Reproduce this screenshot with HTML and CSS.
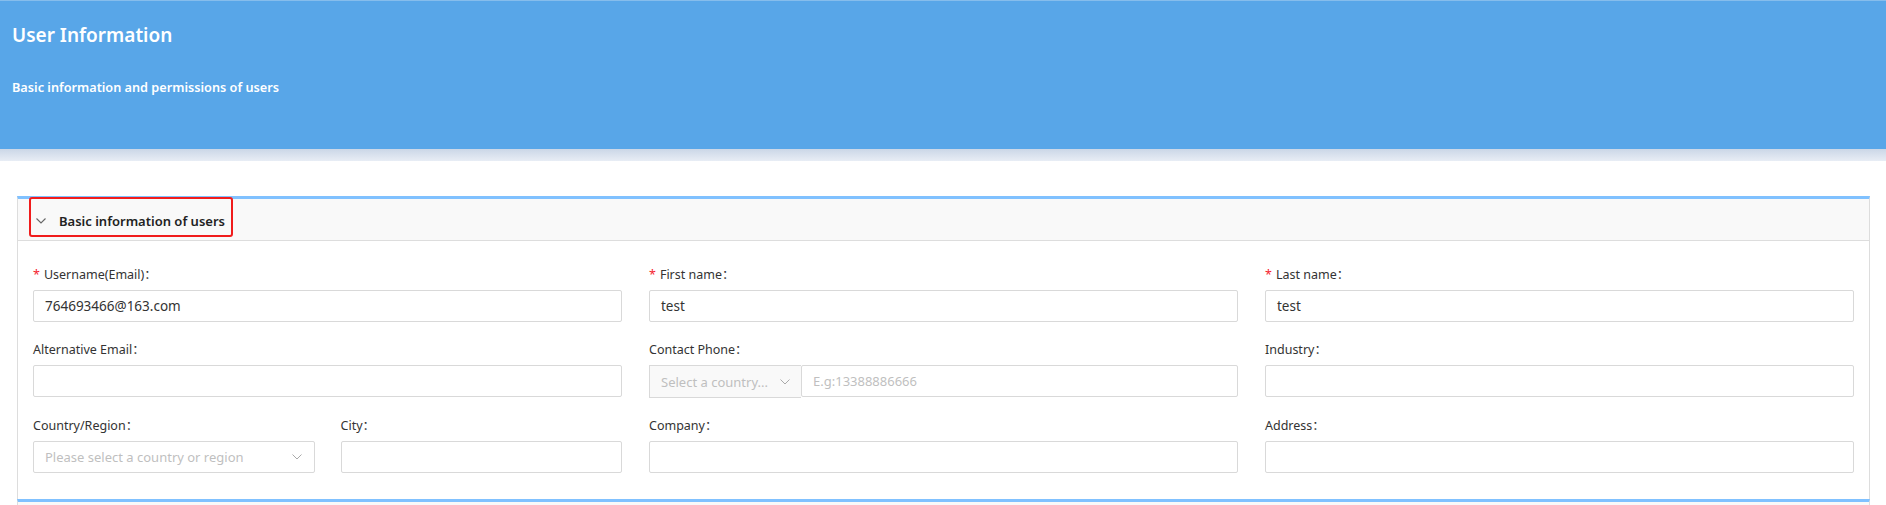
FILE: index.html
```html
<!DOCTYPE html>
<html lang="en">
<head>
<meta charset="utf-8">
<title>User Information</title>
<link rel="stylesheet" href="styles.css">
</head>
<body>
<header class="banner">
  <h1 class="banner-title">User Information</h1>
  <p class="banner-sub">Basic information and permissions of users</p>
</header>
<div class="banner-shade"></div>
<main class="content">
  <section class="panel">
    <div class="panel-head">
      <div class="panel-title">
        <svg class="chev" width="10" height="6" viewBox="0 0 10 6"><path d="M0.5 0.5 L5 5 L9.5 0.5" fill="none" stroke="#666" stroke-width="1.1"/></svg>
        <span>Basic information of users</span>
      </div>
    </div>
    <div class="panel-body">
      <div class="field">
        <label class="label"><span class="req">*</span>Username(Email)：</label>
        <div class="input"><span class="val">764693466@163.com</span></div>
      </div>
      <div class="field">
        <label class="label"><span class="req">*</span>First name：</label>
        <div class="input"><span class="val">test</span></div>
      </div>
      <div class="field">
        <label class="label"><span class="req">*</span>Last name：</label>
        <div class="input"><span class="val">test</span></div>
      </div>

      <div class="field">
        <label class="label">Alternative Email：</label>
        <div class="input"></div>
      </div>
      <div class="field">
        <label class="label">Contact Phone：</label>
        <div class="phone">
          <div class="addon">
            <span class="ph">Select a country...</span>
            <svg class="chev-s" width="10" height="6" viewBox="0 0 10 6"><path d="M0.5 0.5 L5 5 L9.5 0.5" fill="none" stroke="#aaa" stroke-width="1"/></svg>
          </div>
          <div class="input phone-input"><span class="ph">E.g:13388886666</span></div>
        </div>
      </div>
      <div class="field">
        <label class="label">Industry：</label>
        <div class="input"></div>
      </div>

      <div class="split">
        <div class="field">
          <label class="label">Country/Region：</label>
          <div class="input select">
            <span class="ph">Please select a country or region</span>
            <svg class="chev-s" width="10" height="6" viewBox="0 0 10 6"><path d="M0.5 0.5 L5 5 L9.5 0.5" fill="none" stroke="#aaa" stroke-width="1"/></svg>
          </div>
        </div>
        <div class="field">
          <label class="label">City：</label>
          <div class="input"></div>
        </div>
      </div>
      <div class="field">
        <label class="label">Company：</label>
        <div class="input"></div>
      </div>
      <div class="field">
        <label class="label">Address：</label>
        <div class="input"></div>
      </div>
    </div>
  </section>
  <section class="panel panel-next">
    <div class="panel-head"></div>
  </section>
</main>
</body>
</html>
```
FILE: styles.css
```css
* { box-sizing: border-box; }
html, body { margin: 0; padding: 0; background: #fff; }
body {
  font-family: "Noto Sans", "Open Sans", "Liberation Sans", "Noto Sans CJK SC", sans-serif;
  color: #333;
  overflow: hidden;
  height: 505px;
}
.banner {
  height: 149px;
  background: #58a6e8;
  border-top: 1px solid #86bdec;
  padding: 21px 12px 0;
  color: #fff;
}
.banner-title {
  margin: 0;
  font-size: 19px;
  font-weight: 600;
  line-height: 26px;
}
.banner-sub {
  margin: 30px 0 0;
  font-size: 12.7px;
  font-weight: 600;
  line-height: 18px;
}
.banner-shade {
  height: 12px;
  background: linear-gradient(#cbd7e7, #e8edf5);
}
.content {
  padding: 35px 16px 0 17px;
}
.panel {
  border: 1px solid #ddd;
  border-top: 3px solid #80c1ff;
  border-bottom: none;
}
.panel-head {
  height: 42px;
  background: #f9f9f9;
  border-bottom: 1px solid #ddd;
  padding: 0 0 0 11px;
}
.panel-title {
  display: inline-flex;
  align-items: center;
  height: 40px;
  margin-top: -2px;
  border: 2px solid #f01c1c;
  border-radius: 3px;
  padding: 8px 6px 0 5px;
  font-size: 13px;
  font-weight: 600;
  color: #222;
}
.chev { margin-right: 13px; }
.panel-body {
  display: grid;
  grid-template-columns: repeat(3, 1fr);
  column-gap: 27px;
  row-gap: 18px;
  padding: 24px 15px 26px;
}
.split {
  display: grid;
  grid-template-columns: 1fr 1fr;
  column-gap: 26px;
}
.field {
  display: flex;
  flex-direction: column;
  gap: 5px;
}
.label {
  font-size: 12.5px;
  line-height: 20px;
  color: #333;
}
.req {
  color: #f5222d;
  margin-right: 4px;
}
.input {
  height: 32px;
  border: 1px solid #d9d9d9;
  border-radius: 2px;
  background: #fff;
  display: flex;
  align-items: center;
  padding: 0 11px;
  font-size: 13.5px;
  color: #333;
}
.ph {
  color: #bfbfbf;
  font-size: 13px;
}
.select { justify-content: space-between; }
.chev-s { margin-right: 1px; }
.phone { display: flex; }
.addon {
  width: 152px;
  height: 33px;
  border: 1px solid #d9d9d9;
  border-right: none;
  background: #f9f9f9;
  display: flex;
  align-items: center;
  justify-content: space-between;
  padding: 0 10px 0 11px;
  flex-shrink: 0;
}
.phone-input { flex: 1; }
.panel-next { margin-top: 0; }
.panel-next .panel-head { border-bottom: none; }
```
